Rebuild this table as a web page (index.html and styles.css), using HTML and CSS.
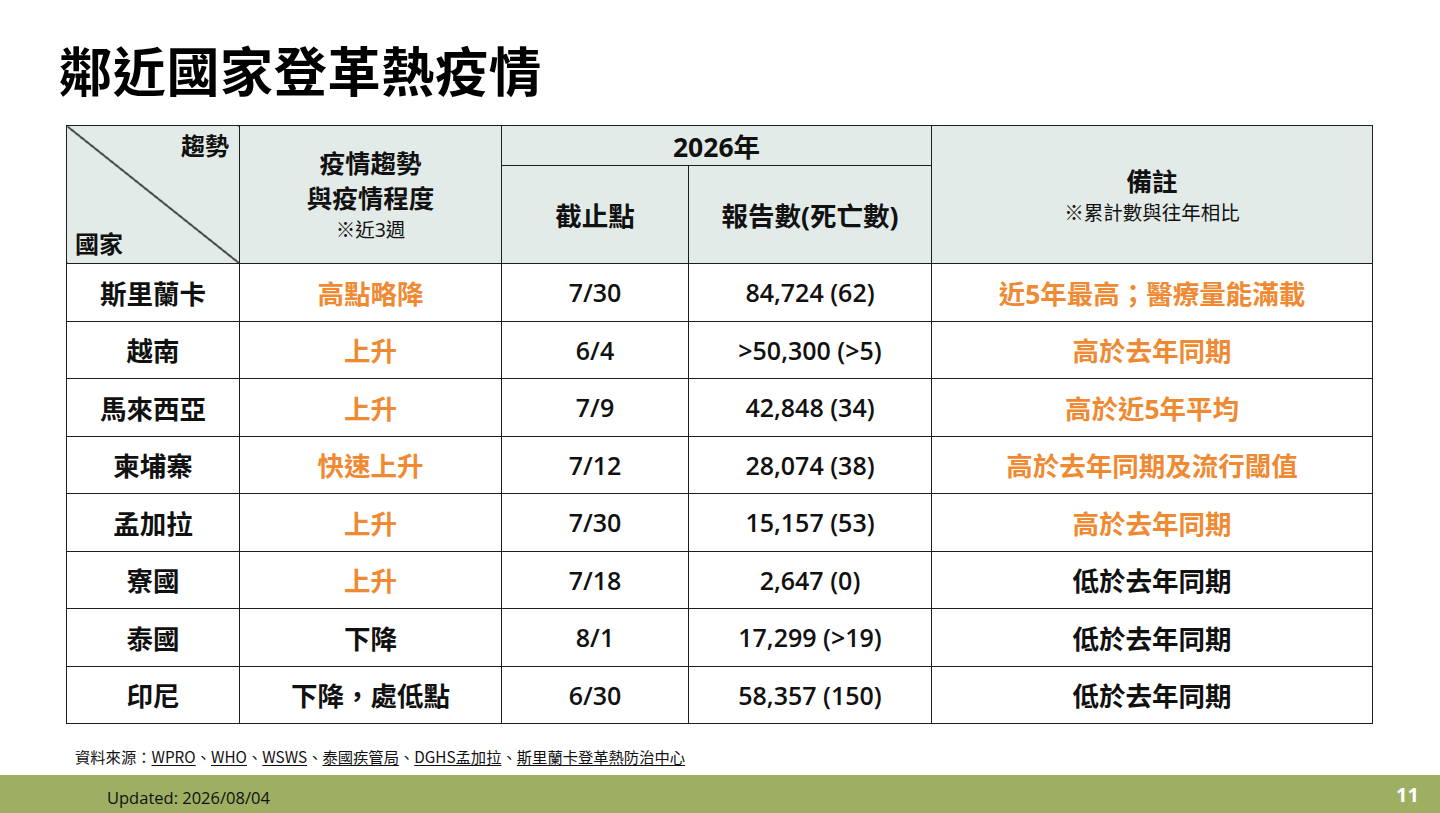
FILE: index.html
```html
<!DOCTYPE html>
<html lang="zh-Hant">
<head>
<meta charset="utf-8">
<link rel="stylesheet" href="styles.css">
</head>
<body>
<div class="slide">
  <h1 class="title">鄰近國家登革熱疫情</h1>
  <table class="grid">
    <colgroup>
      <col class="c1"><col class="c2"><col class="c3"><col class="c4"><col class="c5">
    </colgroup>
    <thead>
      <tr class="h1">
        <th rowspan="2" class="diag">
          <div class="diag-in"><span class="dt">趨勢</span><span class="db">國家</span></div>
        </th>
        <th rowspan="2"><div class="stack"><span class="main">疫情趨勢</span><span class="main">與疫情程度</span><span class="sub">※近3週</span></div></th>
        <th colspan="2">2026年</th>
        <th rowspan="2"><div class="stack"><span class="main">備註</span><span class="sub">※累計數與往年相比</span></div></th>
      </tr>
      <tr class="h2">
        <th>截止點</th>
        <th>報告數(死亡數)</th>
      </tr>
    </thead>
    <tbody>
      <tr><td>斯里蘭卡</td><td class="o">高點略降</td><td class="n">7/30</td><td class="n">84,724 (62)</td><td class="o">近5年最高；醫療量能滿載</td></tr>
      <tr><td>越南</td><td class="o">上升</td><td class="n">6/4</td><td class="n">&gt;50,300 (&gt;5)</td><td class="o">高於去年同期</td></tr>
      <tr><td>馬來西亞</td><td class="o">上升</td><td class="n">7/9</td><td class="n">42,848 (34)</td><td class="o">高於近5年平均</td></tr>
      <tr><td>柬埔寨</td><td class="o">快速上升</td><td class="n">7/12</td><td class="n">28,074 (38)</td><td class="o">高於去年同期及流行閾值</td></tr>
      <tr><td>孟加拉</td><td class="o">上升</td><td class="n">7/30</td><td class="n">15,157 (53)</td><td class="o">高於去年同期</td></tr>
      <tr><td>寮國</td><td class="o">上升</td><td class="n">7/18</td><td class="n">2,647 (0)</td><td>低於去年同期</td></tr>
      <tr><td>泰國</td><td>下降</td><td class="n">8/1</td><td class="n">17,299 (&gt;19)</td><td>低於去年同期</td></tr>
      <tr><td>印尼</td><td>下降，處低點</td><td class="n">6/30</td><td class="n">58,357 (150)</td><td>低於去年同期</td></tr>
    </tbody>
  </table>
  <p class="source">資料來源：<u>WPRO</u>、<u>WHO</u>、<u>WSWS</u>、<u>泰國疾管局</u>、<u>DGHS孟加拉</u>、<u>斯里蘭卡登革熱防治中心</u></p>
  <footer class="bar">
    <span class="upd">Updated: 2026/08/04</span>
    <span class="pg">11</span>
  </footer>
</div>
</body>
</html>
```

FILE: styles.css
```css
html, body {
  margin: 0;
  padding: 0;
  background: #ffffff;
}
.slide {
  width: 1440px;
  height: 813px;
  display: flex;
  flex-direction: column;
  font-family: "Noto Sans", "Noto Sans CJK TC", sans-serif;
  color: #111;
  overflow: hidden;
}
.title {
  margin: 38px 0 0 59px;
  font-family: "Noto Sans CJK TC", sans-serif;
  font-size: 53px;
  line-height: 62px;
  font-weight: 700;
  letter-spacing: 0.7px;
  color: #000;
}
.grid {
  margin: 25px 0 0 66px;
  width: 1306px;
  border-collapse: collapse;
  table-layout: fixed;
}
.c1 { width: 173px; }
.c2 { width: 262px; }
.c3 { width: 187px; }
.c4 { width: 243px; }
.c5 { width: 441px; }
.grid th, .grid td {
  border: 1.5px solid #1e1e1e;
  text-align: center;
  vertical-align: middle;
  padding: 0;
  font-family: "Open Sans", "Noto Sans CJK TC", sans-serif;
  font-weight: 700;
  font-size: 26.5px;
}
.grid thead th {
  background-color: #e3ebe8;
  color: #111;
}
.h1 { height: 40px; }
.h2 { height: 98px; }
.grid tbody tr { height: 57.5px; }
.grid td { color: #111; }
.grid td.o { color: #ef8a33; }
.grid td.n {
  font-family: "Open Sans", sans-serif;
  font-weight: 600;
  font-size: 25px;
}
.stack {
  display: flex;
  flex-direction: column;
  align-items: center;
}
.stack .main {
  font-size: 25.5px;
  line-height: 35px;
}
.stack .sub {
  font-family: "Open Sans", "Noto Sans CJK TC", sans-serif;
  font-weight: 400;
  font-size: 19.5px;
  line-height: 27px;
}
.grid thead th.diag {
  background-image: linear-gradient(to top right, transparent calc(50% - 1px), #1e1e1e calc(50% - 0.6px), #1e1e1e calc(50% + 0.6px), transparent calc(50% + 1px));
}
.diag-in {
  height: 136px;
  display: flex;
  flex-direction: column;
  justify-content: space-between;
  font-size: 24px;
  line-height: 32px;
  padding: 3px 10px 3px 8px;
  box-sizing: border-box;
}
.dt { text-align: right; }
.db { text-align: left; }
.source {
  margin: 22px 0 0 75px;
  font-family: "Noto Sans CJK TC", sans-serif;
  font-size: 15.3px;
  line-height: 20px;
  color: #111;
}
.source u { text-underline-offset: 2px; }
.bar {
  margin-top: auto;
  height: 38px;
  background: #9daf62;
  display: flex;
  align-items: center;
  justify-content: space-between;
  padding: 0 21px 0 107px;
}
.upd {
  font-family: "Open Sans", sans-serif;
  font-size: 16.5px;
  color: #111;
  padding-top: 6px;
}
.pg {
  font-family: "Noto Sans", sans-serif;
  font-weight: 700;
  font-size: 20px;
  color: #fff;
}
```
